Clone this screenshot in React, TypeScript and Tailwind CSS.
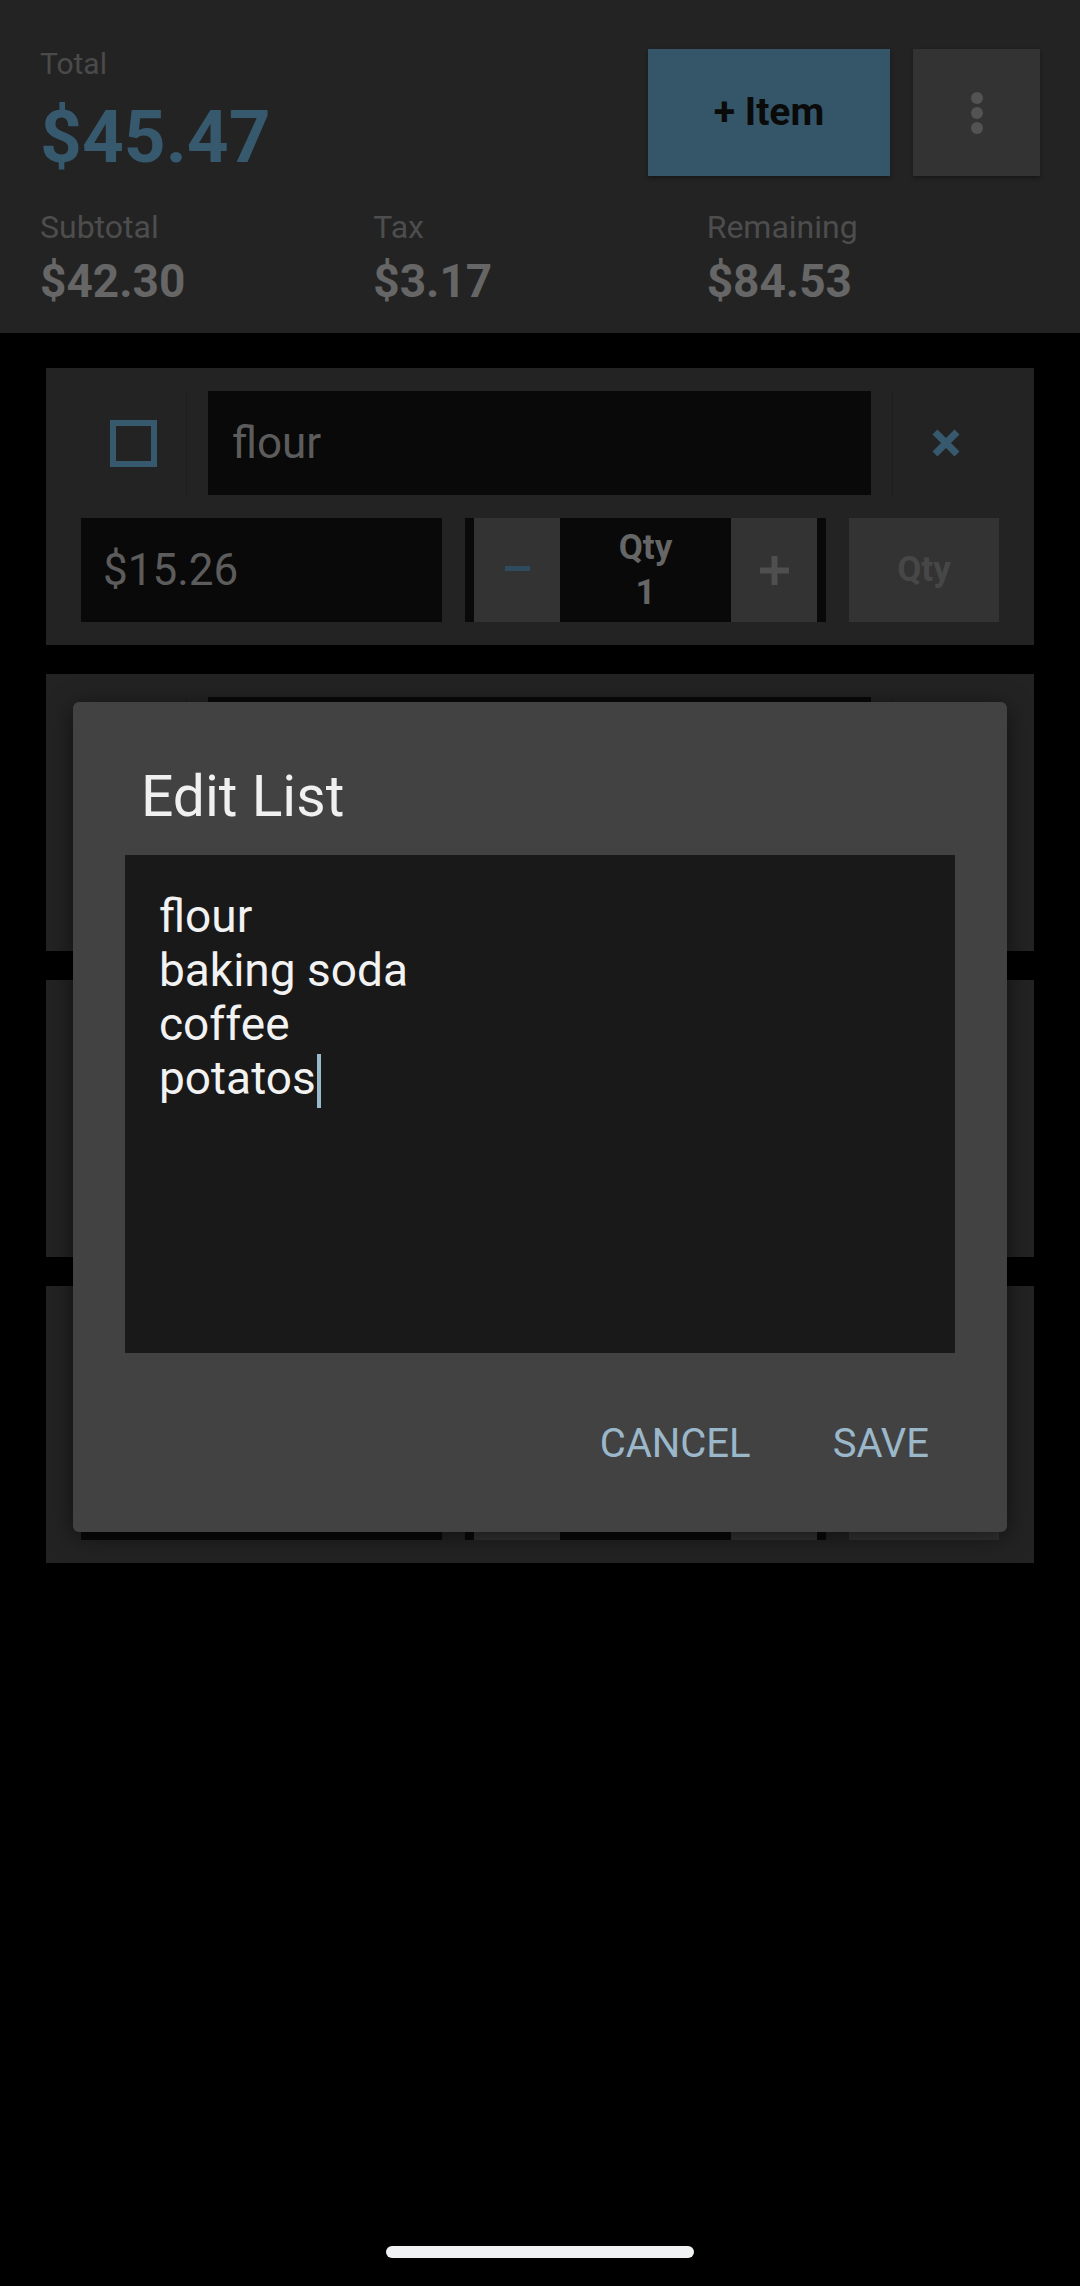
import React from 'react';

interface Item {
  name: string;
  price: string;
  qty: number;
}

const items: Item[] = [
  { name: 'flour', price: '$15.26', qty: 1 },
  { name: 'baking soda', price: '$8.49', qty: 1 },
  { name: 'coffee', price: '$12.99', qty: 1 },
  { name: 'potatos', price: '$5.56', qty: 1 },
];

const font = { fontFamily: 'Roboto, "Noto Sans", sans-serif' };

function Summary({ label, value }: { label: string; value: string }) {
  return (
    <div className="flex flex-col gap-[8px]">
      <span className="text-[32px] leading-[38px] text-[#4d4d4d]">{label}</span>
      <span className="text-[46px] leading-[54px] font-bold text-[#666666]">{value}</span>
    </div>
  );
}

function Header() {
  return (
    <div className="h-[333px] shrink-0 bg-[#232323] pl-[40px] pr-[40px] pt-[46px]">
      <div className="flex items-start justify-between">
        <div className="flex flex-col gap-[11px]">
          <span className="text-[30px] leading-[36px] text-[#4a4a4a]">Total</span>
          <span className="text-[73px] leading-[88px] font-bold text-[#36596e]">$45.47</span>
        </div>
        <div className="mt-[3px] flex gap-[23px]">
          <button className="flex h-[127px] w-[242px] items-center justify-center bg-[#345668] text-[39px] font-bold text-[#0a0a0a] shadow-[0_2px_4px_rgba(0,0,0,0.35)]">
            + Item
          </button>
          <button className="flex h-[127px] w-[127px] flex-col items-center justify-center gap-[3px] bg-[#333333] shadow-[0_2px_4px_rgba(0,0,0,0.35)]">
            <span className="h-[12px] w-[12px] rounded-full bg-[#535353]" />
            <span className="h-[12px] w-[12px] rounded-full bg-[#535353]" />
            <span className="h-[12px] w-[12px] rounded-full bg-[#535353]" />
          </button>
        </div>
      </div>
      <div className="mt-[27px] grid grid-cols-3">
        <Summary label="Subtotal" value="$42.30" />
        <Summary label="Tax" value="$3.17" />
        <Summary label="Remaining" value="$84.53" />
      </div>
    </div>
  );
}

// cards under the dialog keep their layout; their labels stay hidden behind it
function ItemCard({ item, covered }: { item: Item; covered: boolean }) {
  const label = covered ? 'invisible' : '';
  return (
    <div className="flex flex-col gap-[23px] bg-[#232323] px-[35px] py-[23px]">
      <div className="flex h-[104px]">
        <div className="flex w-[105px] items-center justify-center">
          <div className="h-[47px] w-[47px] border-[6px] border-[#36596d]" />
        </div>
        <div className="flex-1 border-x border-[#1d1d1d] px-[21px]">
          <div className="flex h-full items-center bg-[#090909] pl-[24px] text-[44px] text-[#5c5c5c]">
            <span className={label}>{item.name}</span>
          </div>
        </div>
        <div className="flex w-[106px] items-center justify-center">
          <svg width="28" height="28" viewBox="0 0 28 28">
            <path d="M3 3 L25 25 M25 3 L3 25" stroke="#36596d" strokeWidth="7" />
          </svg>
        </div>
      </div>
      <div className="flex h-[104px] gap-[23px]">
        <div className="flex w-[361px] items-center bg-[#090909] pl-[22px] text-[44px] text-[#5c5c5c]">
          <span className={label}>{item.price}</span>
        </div>
        <div className="flex w-[361px] bg-[#090909] px-[9px]">
          <div className="flex w-[86px] items-center justify-center bg-[#333333]">
            <div className="mt-[-4px] h-[5px] w-[25px] bg-[#2f4c5e]" />
          </div>
          <div className={`flex flex-1 flex-col items-center justify-center text-[35px] font-bold leading-[45px] text-[#666666] ${label}`}>
            <span>Qty</span>
            <span>{item.qty}</span>
          </div>
          <div className="flex w-[86px] items-center justify-center bg-[#333333]">
            <svg width="29" height="29" viewBox="0 0 29 29">
              <path d="M14.5 0 V29 M0 14.5 H29" stroke="#4f4f4f" strokeWidth="6" />
            </svg>
          </div>
        </div>
        <div className="flex w-[150px] items-center justify-center bg-[#333333] text-[35px] font-bold text-[#474747]">
          <span className={label}>Qty</span>
        </div>
      </div>
    </div>
  );
}

function EditListDialog() {
  const lines = ['flour', 'baking soda', 'coffee', 'potatos'];
  return (
    <div className="absolute inset-0 flex justify-center pt-[702px]">
      <div className="flex h-[830px] w-[934px] flex-col rounded-[6px] bg-[#424242] pt-[62px] shadow-[0_4px_24px_rgba(0,0,0,0.55)]">
        <h2 className="pl-[68px] text-[57px] leading-[66px] text-[#f0f0f0]">Edit List</h2>
        <div className="mx-[52px] mt-[25px] h-[498px] bg-[#191919] pl-[34px] pt-[34px] text-[46px] leading-[54px] text-[#f2f2f2]">
          {lines.map((line, i) => (
            <div key={line} className="flex">
              <span>{line}</span>
              {i === lines.length - 1 && (
                <span className="ml-[1px] inline-block h-[54px] w-[4px] translate-y-[3px] bg-[#9ab8cc]" />
              )}
            </div>
          ))}
        </div>
        <div className="mt-[68px] flex justify-end gap-[82px] pr-[78px] text-[40px] leading-[46px] text-[#9bb8cb]">
          <button>CANCEL</button>
          <button>SAVE</button>
        </div>
      </div>
    </div>
  );
}

export default function App() {
  return (
    <div className="relative flex h-[2286px] w-[1080px] flex-col overflow-hidden bg-black" style={font}>
      <Header />
      <div className="flex flex-col gap-[29px] px-[46px] pt-[35px]">
        {items.map((item, i) => (
          <ItemCard key={item.name} item={item} covered={i > 0} />
        ))}
      </div>
      <div className="mt-auto flex justify-center pb-[28px]">
        <div className="h-[12px] w-[308px] rounded-full bg-[#f0f2f4]" />
      </div>
      <EditListDialog />
    </div>
  );
}
